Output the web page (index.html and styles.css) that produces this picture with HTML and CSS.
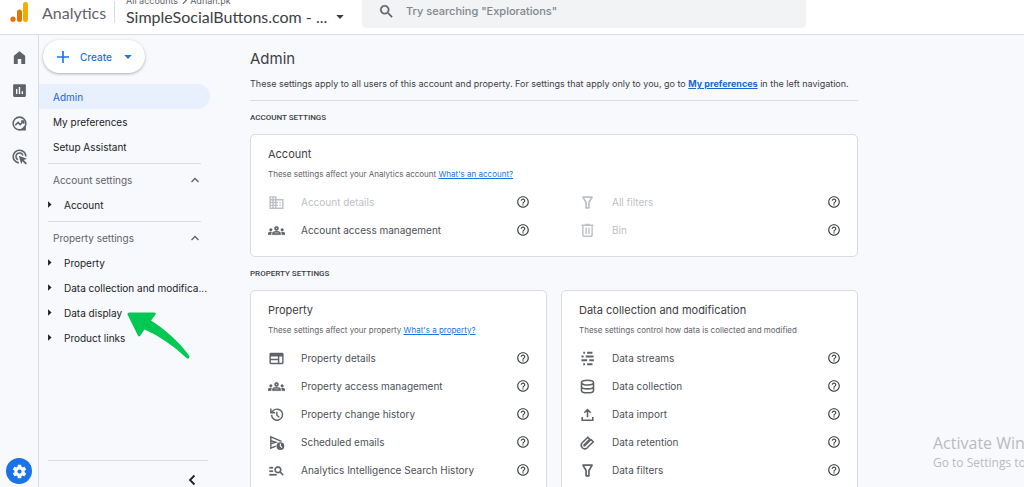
FILE: index.html
```html
<!DOCTYPE html>
<html lang="en">
<head>
<meta charset="utf-8">
<title>Analytics Admin</title>
<link rel="stylesheet" href="styles.css">
</head>
<body>
<svg class="sprite" aria-hidden="true">
  <symbol id="help" viewBox="0 0 24 24"><path d="M11 18h2v-2h-2v2zm1-16C6.48 2 2 6.48 2 12s4.48 10 10 10 10-4.48 10-10S17.52 2 12 2zm0 18c-4.41 0-8-3.59-8-8s3.59-8 8-8 8 3.59 8 8-3.59 8-8 8zm0-14c-2.21 0-4 1.79-4 4h2c0-1.1.9-2 2-2s2 .9 2 2c0 2-3 1.75-3 5h2c0-2.25 3-2.5 3-5 0-2.21-1.79-4-4-4z"/></symbol>
  <symbol id="groups" viewBox="0 0 24 24"><path d="M4 13c1.1 0 2-.9 2-2s-.9-2-2-2-2 .9-2 2 .9 2 2 2zm1.130 1.100c-.37-.06-.74-.1-1.130-.1-.99 0-1.930.21-2.780.58C.48 14.900 0 15.620 0 16.430V18h4.500v-1.610c0-.83.23-1.610.63-2.290zM20 13c1.100 0 2-.9 2-2s-.9-2-2-2-2 .9-2 2 .9 2 2 2zm4 3.430c0-.81-.48-1.530-1.220-1.850-.85-.37-1.790-.58-2.780-.58-.39 0-.76.04-1.130.1.4.68.63 1.460.63 2.290V18H24v-1.570zM16.240 13.650c-1.170-.52-2.610-.9-4.240-.9s-3.070.39-4.240.9C6.680 14.130 6 15.210 6 16.390V18h12v-1.610c0-1.180-.68-2.260-1.760-2.740zM8.070 16c.09-.23.13-.39.91-.69.97-.38 1.990-.56 3.020-.56s2.050.18 3.020.56c.77.3.81.46.91.69H8.070zM12 8c.55 0 1 .45 1 1s-.45 1-1 1-1-.45-1-1 .45-1 1-1m0-2c-1.660 0-3 1.340-3 3s1.340 3 3 3 3-1.340 3-3-1.340-3-3-3z" stroke="currentColor" stroke-width=".4"/></symbol>
  <symbol id="domain" viewBox="0 0 24 24"><path d="M12 7V3H2v18h20V7H12zM6 19H4v-2h2v2zm0-4H4v-2h2v2zm0-4H4V9h2v2zm0-4H4V5h2v2zm4 12H8v-2h2v2zm0-4H8v-2h2v2zm0-4H8V9h2v2zm0-4H8V5h2v2zm10 12h-8v-2h2v-2h-2v-2h2v-2h-2V9h8v10zm-2-8h-2v2h2v-2zm0 4h-2v2h2v-2z"/></symbol>
  <symbol id="filter" viewBox="0 0 24 24"><path d="M5.500 4.500h13L14 12v7.500h-4V12z" fill="none" stroke="currentColor" stroke-width="2.400" stroke-linejoin="round"/></symbol>
  <symbol id="bin" viewBox="0 0 24 24"><path d="M3.500 4.500h17M9 3.500h6M5.500 5v14q0 1 1 1h11q1 0 1-1V5M10 8v9M14 8v9" fill="none" stroke="currentColor" stroke-width="2"/></symbol>
  <symbol id="web" viewBox="0 0 24 24"><path d="M20 4H4c-1.100 0-2 .9-2 2v12c0 1.100.9 2 2 2h16c1.100 0 2-.9 2-2V6c0-1.100-.9-2-2-2zm-6 14H4v-3.500h10V18zm0-5.500H4V9h10v3.500zm6 5.500h-4V9h4v9z"/></symbol>
  <symbol id="history" viewBox="0 0 24 24"><path d="M5 12.500a7.800 7.800 0 1 0 2.500-6L4 9.500M4 3.500v6h6M12.500 8v5l3.500 3" fill="none" stroke="currentColor" stroke-width="2"/></symbol>
  <symbol id="schedule" viewBox="0 0 24 24"><path d="M11 17l-7 3V4l15 6.500M4 9.500l7 2.200-7 2.300" fill="none" stroke="currentColor" stroke-width="2"/><path fill-rule="evenodd" d="M17.500 11.500a5.500 5.500 0 1 0 0 11 5.500 5.500 0 0 0 0-11zm-.8 2h1.500v3.200l2.100 2-1 1-2.600-2.500z"/></symbol>
  <symbol id="manage-search" viewBox="0 0 24 24"><path d="M7 9H2V7h5v2zm0 3H2v2h5v-2zm13.590 7-3.830-3.830c-.8.52-1.740.83-2.760.83-2.760 0-5-2.240-5-5s2.240-5 5-5 5 2.240 5 5c0 1.020-.31 1.960-.83 2.750L22 17.590 20.590 19zM17 11c0-1.650-1.350-3-3-3s-3 1.350-3 3 1.350 3 3 3 3-1.350 3-3zM2 19h10v-2H2v2z" stroke="currentColor" stroke-width=".4"/></symbol>
  <symbol id="streams" viewBox="0 0 24 24"><path d="M6 4h2.500M11.500 4h7.500M3.500 9.200h3M9.500 9.200h11M3.500 14.600h8M14.500 14.600h6.500M6 20h2.500M11.500 20h7.500" fill="none" stroke="currentColor" stroke-width="2.800"/></symbol>
  <symbol id="database" viewBox="0 0 24 24"><path d="M3.500 6.500c0-4.500 17-4.500 17 0s-17 4.500-17 0v11c0 4.500 17 4.500 17 0v-11M3.500 12c0 4.500 17 4.500 17 0" fill="none" stroke="currentColor" stroke-width="2.200"/></symbol>
  <symbol id="upload" viewBox="0 0 24 24"><path d="M12 16V5.500M7.500 9.500L12 5l4.500 4.500M4.500 15.500V20h15v-4.500" fill="none" stroke="currentColor" stroke-width="2.200"/></symbol>
  <symbol id="clip" viewBox="0 0 24 24"><path d="M13.500 3.500l-8.300 8.300a5 5 0 0 0 7 7l9-8.800-3.300-3.300-8.800 8.800a.6.6 0 0 1-1-1l8-8z" transform="translate(-1 1)" fill="none" stroke="currentColor" stroke-width="2.200" stroke-linejoin="round"/></symbol>
  <symbol id="up" viewBox="0 0 24 24"><path d="M5 16l7-7 7 7" fill="none" stroke="currentColor" stroke-width="2.500"/></symbol>
  <symbol id="tri" viewBox="0 0 24 24"><path d="M7 1l12 11L7 23z"/></symbol>
  <symbol id="caret" viewBox="0 0 24 24"><path d="M3 7h18l-9 10z"/></symbol>
</svg>

<header class="topbar">
  <a class="brand" href="#">
    <svg class="logo" viewBox="0 0 18 20" aria-hidden="true"><circle cx="3" cy="17.200" r="2.600" fill="#e37400"/><rect x="7" y="7.500" width="5" height="12.400" rx="2.500" fill="#e37400"/><rect x="13" y="0" width="5" height="20" rx="2.300" fill="#f9ab00"/></svg>
    <span>Analytics</span>
  </a>
  <button class="picker" type="button">
    <span class="picker-path">All accounts <svg class="path-arrow" viewBox="0 0 6 8"><path d="M1 0l4 4-4 4" fill="none" stroke="currentColor" stroke-width="1.300"/></svg> Adnan.pk</span>
    <span class="picker-name">SimpleSocialButtons.com - ... <svg class="caret"><use href="#caret"/></svg></span>
  </button>
  <label class="search">
    <svg viewBox="0 0 24 24" aria-hidden="true"><path d="M15.500 14h-.79l-.28-.27C15.410 12.590 16 11.110 16 9.500 16 5.910 13.090 3 9.500 3S3 5.910 3 9.500 5.910 16 9.500 16c1.610 0 3.090-.59 4.230-1.570l.27.28v.79l5 4.990L20.490 19l-4.990-5zm-6 0C7.010 14 5 11.990 5 9.500S7.010 5 9.500 5 14 7.010 14 9.500 11.990 14 9.500 14z" stroke="currentColor" stroke-width=".5"/></svg>
    <input type="text" placeholder='Try searching "Explorations"' aria-label="Search">
  </label>
</header>

<div class="shell">
  <nav class="rail" aria-label="Sections">
    <a href="#" aria-label="Home"><svg viewBox="0 0 24 24"><path d="M4 21V9.500L12 3l8 6.500V21h-5.500v-7h-5v7z"/></svg></a>
    <a href="#" aria-label="Reports"><svg viewBox="0 0 24 24"><path d="M19.500 3h-15C3.700 3 3 3.700 3 4.500v15c0 .8.7 1.500 1.500 1.500h15c.8 0 1.500-.7 1.500-1.500v-15c0-.8-.7-1.500-1.500-1.500zM9 17H7v-7h2v7zm4 0h-2V7h2v10zm4 0h-2v-4h2v4z"/></svg></a>
    <a href="#" aria-label="Explore"><svg viewBox="0 0 24 24"><g fill="none" stroke="currentColor" stroke-width="2.200"><circle cx="12" cy="12" r="9"/><path d="M6 14.500l4-4 3 3 5-5M14 8.500h4v4"/></g><path d="M14 20.500l7-7V22h-8z"/></svg></a>
    <a href="#" aria-label="Advertising"><svg viewBox="0 0 24 24"><g fill="none" stroke="currentColor" stroke-width="2.200"><path d="M11 21a9 9 0 1 1 10-9"/><path d="M10 16.600a5 5 0 1 1 6.800-6"/></g><path d="M11 11l11.500 4-4.500 2 4.500 4.500-1.800 1.800-4.500-4.500-1.700 4.200z"/></svg></a>
    <a class="rail-admin" href="#" aria-label="Admin"><svg viewBox="0 0 24 24"><path d="M19.140 12.940c.04-.3.060-.61.060-.94 0-.32-.02-.64-.07-.94l2.030-1.580c.18-.14.23-.41.120-.61l-1.920-3.320c-.12-.22-.37-.29-.59-.22l-2.390.96c-.5-.38-1.030-.7-1.620-.94l-.36-2.540c-.04-.24-.24-.41-.48-.41h-3.840c-.24 0-.43.17-.47.410l-.36 2.540c-.59.24-1.130.57-1.620.94l-2.390-.96c-.22-.08-.47 0-.59.220L2.740 8.870c-.12.210-.08.470.12.610l2.030 1.580c-.05.3-.09.630-.09.94s.02.640.07.940l-2.030 1.580c-.18.140-.23.410-.12.610l1.920 3.320c.12.220.37.290.59.220l2.390-.96c.5.380 1.030.7 1.620.940l.36 2.540c.05.240.24.410.48.410h3.840c.24 0 .44-.17.470-.41l.36-2.540c.59-.24 1.130-.56 1.620-.94l2.390.96c.22.080.47 0 .59-.22l1.920-3.320c.12-.22.070-.47-.12-.61l-2.010-1.580zM12 15a3 3 0 1 1 0-6 3 3 0 0 1 0 6z"/></svg></a>
  </nav>

  <aside class="side">
    <button class="create" type="button"><svg class="plus" viewBox="0 0 12 12"><path d="M6 0v12M0 6h12" stroke="currentColor" stroke-width="1.600"/></svg><span>Create</span><svg class="caret"><use href="#caret"/></svg></button>
    <nav class="menu" aria-label="Admin menu">
      <a class="item active" href="#">Admin</a>
      <a class="item" href="#">My preferences</a>
      <a class="item" href="#">Setup Assistant</a>
      <hr>
      <button class="item group" type="button">Account settings <svg class="up"><use href="#up"/></svg></button>
      <a class="item sub" href="#"><svg class="tri"><use href="#tri"/></svg><span>Account</span></a>
      <hr>
      <button class="item group" type="button">Property settings <svg class="up"><use href="#up"/></svg></button>
      <a class="item sub" href="#"><svg class="tri"><use href="#tri"/></svg><span>Property</span></a>
      <a class="item sub" href="#"><svg class="tri"><use href="#tri"/></svg><span>Data collection and modifica...</span></a>
      <a class="item sub pointed" href="#"><svg class="tri"><use href="#tri"/></svg><span>Data display</span>
        <svg class="arrow" viewBox="0 0 64 48" aria-hidden="true"><path d="M2 .5h25q2.500 .3 1.500 2L24 8.500c13 8 27 20 38 35q1 1.500 0 2.500t-2.500 0C49 36 31 23 17.500 17.500l-4.500 6.500q-1 1-2-.3L.5 2.500Q0 .8 2 .5z"/></svg></a>
      <a class="item sub" href="#"><svg class="tri"><use href="#tri"/></svg><span>Product links</span></a>
    </nav>
    <div class="side-foot"><button type="button" aria-label="Collapse menu"><svg viewBox="0 0 8 12"><path d="M6.500 1.500L2 6l4.500 4.500" fill="none" stroke="currentColor" stroke-width="1.800"/></svg></button></div>
  </aside>

  <main class="content">
    <h1>Admin</h1>
    <p class="intro">These settings apply to all users of this account and property. For settings that apply only to you, go to <a href="#">My preferences</a> in the left navigation.</p>

    <h2>Account settings</h2>
    <section class="card">
      <h3>Account</h3>
      <p>These settings affect your Analytics account <a href="#">What's an account?</a></p>
      <ul class="rows two">
        <li class="off"><svg class="ico"><use href="#domain"/></svg><span>Account details</span><button type="button" aria-label="Help"><svg><use href="#help"/></svg></button></li>
        <li class="off"><svg class="ico"><use href="#filter"/></svg><span>All filters</span><button type="button" aria-label="Help"><svg><use href="#help"/></svg></button></li>
        <li><svg class="ico"><use href="#groups"/></svg><span>Account access management</span><button type="button" aria-label="Help"><svg><use href="#help"/></svg></button></li>
        <li class="off"><svg class="ico"><use href="#bin"/></svg><span>Bin</span><button type="button" aria-label="Help"><svg><use href="#help"/></svg></button></li>
      </ul>
    </section>

    <h2>Property settings</h2>
    <div class="cards">
      <section class="card">
        <h3>Property</h3>
        <p>These settings affect your property <a href="#">What's a property?</a></p>
        <ul class="rows">
          <li><svg class="ico"><use href="#web"/></svg><span>Property details</span><button type="button" aria-label="Help"><svg><use href="#help"/></svg></button></li>
          <li><svg class="ico"><use href="#groups"/></svg><span>Property access management</span><button type="button" aria-label="Help"><svg><use href="#help"/></svg></button></li>
          <li><svg class="ico"><use href="#history"/></svg><span>Property change history</span><button type="button" aria-label="Help"><svg><use href="#help"/></svg></button></li>
          <li><svg class="ico"><use href="#schedule"/></svg><span>Scheduled emails</span><button type="button" aria-label="Help"><svg><use href="#help"/></svg></button></li>
          <li><svg class="ico"><use href="#manage-search"/></svg><span>Analytics Intelligence Search History</span><button type="button" aria-label="Help"><svg><use href="#help"/></svg></button></li>
        </ul>
      </section>
      <section class="card">
        <h3>Data collection and modification</h3>
        <p>These settings control how data is collected and modified</p>
        <ul class="rows">
          <li><svg class="ico"><use href="#streams"/></svg><span>Data streams</span><button type="button" aria-label="Help"><svg><use href="#help"/></svg></button></li>
          <li><svg class="ico"><use href="#database"/></svg><span>Data collection</span><button type="button" aria-label="Help"><svg><use href="#help"/></svg></button></li>
          <li><svg class="ico"><use href="#upload"/></svg><span>Data import</span><button type="button" aria-label="Help"><svg><use href="#help"/></svg></button></li>
          <li><svg class="ico"><use href="#clip"/></svg><span>Data retention</span><button type="button" aria-label="Help"><svg><use href="#help"/></svg></button></li>
          <li><svg class="ico"><use href="#filter"/></svg><span>Data filters</span><button type="button" aria-label="Help"><svg><use href="#help"/></svg></button></li>
        </ul>
      </section>
    </div>
  </main>
</div>

<div class="watermark">
  <div class="watermark-title">Activate Windows</div>
  <div>Go to Settings to activate Windows.</div>
</div>
</body>
</html>
```
FILE: styles.css
```css
* { box-sizing: border-box; }
body {
  margin: 0;
  height: 100vh;
  display: flex;
  flex-direction: column;
  overflow: hidden;
  position: relative;
  background: #f8f9fc;
  color: #3c4043;
  font-family: Inter, Roboto, sans-serif;
  font-size: 10px;
}
svg { fill: currentColor; flex: none; }
button { border: 0; padding: 0; background: none; color: inherit; font: inherit; cursor: pointer; }
a { color: inherit; text-decoration: none; }
.sprite { position: absolute; width: 0; height: 0; }

.topbar {
  flex: none;
  display: flex;
  align-items: flex-end;
  height: 35px;
  background: #fff;
  border-bottom: 1px solid #dadce0;
}
.brand {
  display: flex;
  align-items: center;
  gap: 14px;
  width: 115px;
  height: 22px;
  margin-bottom: 11px;
  padding-left: 10px;
  border-right: 1px solid #dadce0;
  color: #5f6368;
  font-family: Lato, Roboto, sans-serif;
  font-size: 16px;
}
.logo { width: 18px; height: 20px; }
.picker {
  display: flex;
  flex-direction: column;
  align-items: flex-start;
  width: 247px;
  padding: 0 0 7px 11px;
}
.picker-path { font-size: 9px; line-height: 12px; color: #5f6368; }
.path-arrow { width: 5px; height: 7px; margin: 0 1px; }
.picker-name {
  display: flex;
  align-items: center;
  gap: 8px;
  font-family: Lato, Roboto, sans-serif;
  font-size: 16px;
  line-height: 20px;
  white-space: nowrap;
}
.caret { width: 10px; height: 10px; }
.search {
  flex: 1;
  display: flex;
  align-items: center;
  gap: 11px;
  height: 34px;
  margin: 0 218px 6px 0;
  padding: 0 16px;
  background: #f1f3f4;
  border-radius: 4px;
  color: #5f6368;
}
.search svg { width: 17px; height: 17px; }
.search input {
  flex: 1;
  border: 0;
  padding: 0;
  background: none;
  outline: 0;
  font: 500 11px Inter, Roboto, sans-serif;
}
.search input::placeholder { color: #80868b; }

.shell { flex: 1; min-height: 0; display: flex; }
.rail {
  flex: none;
  display: flex;
  flex-direction: column;
  align-items: center;
  gap: 16px;
  width: 39px;
  padding-top: 14px;
  border-right: 1px solid #dadce0;
  color: #5f6368;
}
.rail a { display: flex; }
.rail svg { width: 17px; height: 17px; }
.rail .rail-admin {
  align-items: center;
  justify-content: center;
  width: 26px;
  height: 26px;
  margin: auto 0 3px;
  border-radius: 50%;
  background: #1a73e8;
  color: #fff;
}

.side {
  flex: none;
  display: flex;
  flex-direction: column;
  width: 171px;
  padding-top: 5px;
}
.create {
  display: flex;
  align-items: center;
  gap: 11px;
  align-self: flex-start;
  height: 33px;
  margin: 0 0 11px 4px;
  padding: 0 12px 0 14px;
  border-radius: 17px;
  background: #fff;
  box-shadow: 0 1px 3px rgba(60, 64, 67, .4);
  color: #1a73e8;
  font-weight: 500;
}
.plus { width: 12px; height: 12px; }
.menu { display: flex; flex-direction: column; color: #202124; }
.menu hr { margin: 4px 9px 3px; border: 0; border-top: 1px solid #dadce0; }
.item {
  display: flex;
  align-items: center;
  height: 25px;
  padding-left: 14px;
  white-space: nowrap;
}
.active { border-radius: 0 13px 13px 0; background: #e8f0fe; color: #1967d2; }
.group { justify-content: space-between; padding-right: 9px; color: #5f6368; }
.up { width: 12px; height: 12px; }
.sub { gap: 11px; padding-left: 7px; }
.tri { width: 7px; height: 7px; color: #202124; }
.pointed { position: relative; }
.arrow { position: absolute; left: 88px; top: 12px; width: 64px; height: 48px; color: #00c853; }
.side-foot {
  display: flex;
  justify-content: flex-end;
  height: 27px;
  margin: auto 2px 0 9px;
  padding: 12px 12px 0 0;
  border-top: 1px solid #dadce0;
  color: #202124;
}
.side-foot svg { display: block; width: 8px; height: 12px; }

.content { flex: 1; min-width: 0; padding: 14px 166px 0 40px; overflow: hidden; }
h1, h2, h3, p, ul { margin: 0; padding: 0; }
h1 { font-size: 15px; font-weight: 400; line-height: 20px; }
.intro {
  padding: 5px 0 6px;
  border-bottom: 1px solid #dadce0;
  font-size: 9px;
  line-height: 20px;
  white-space: nowrap;
}
.intro a { color: #1967d2; font-weight: 700; text-decoration: underline; }
h2 {
  padding: 7px 0 6px;
  font: 500 8px/20px Roboto, sans-serif;
  text-transform: uppercase;
}
.card {
  padding: 9px 16px 12px 17px;
  background: #fff;
  border: 1px solid #dadce0;
  border-radius: 5px;
}
.card h3 { font-size: 11px; font-weight: 400; line-height: 20px; }
.card p { color: #5f6368; font-size: 8px; line-height: 20px; white-space: nowrap; }
.card p a { color: #1a73e8; text-decoration: underline; }
.cards { display: grid; grid-template-columns: 1fr 1fr; gap: 14px; }
.rows { padding-top: 4px; list-style: none; color: #4d5156; }
.two { display: grid; grid-template-columns: 1fr 1fr; column-gap: 49px; }
.rows li { display: flex; align-items: center; gap: 16px; height: 28px; white-space: nowrap; }
.rows span { flex: 1; }
.ico { width: 17px; height: 17px; color: #5f6368; }
.off .ico, .off span { color: #bdc1c6; }
.rows button { color: #3c4043; }
.rows button svg { display: block; width: 14px; height: 14px; }

.watermark {
  position: absolute;
  left: 933px;
  bottom: 16px;
  color: #b9bbbe;
  font: 12px/17px "Open Sans", sans-serif;
  white-space: nowrap;
}
.watermark-title { font-size: 16px; line-height: 22px; }
```
